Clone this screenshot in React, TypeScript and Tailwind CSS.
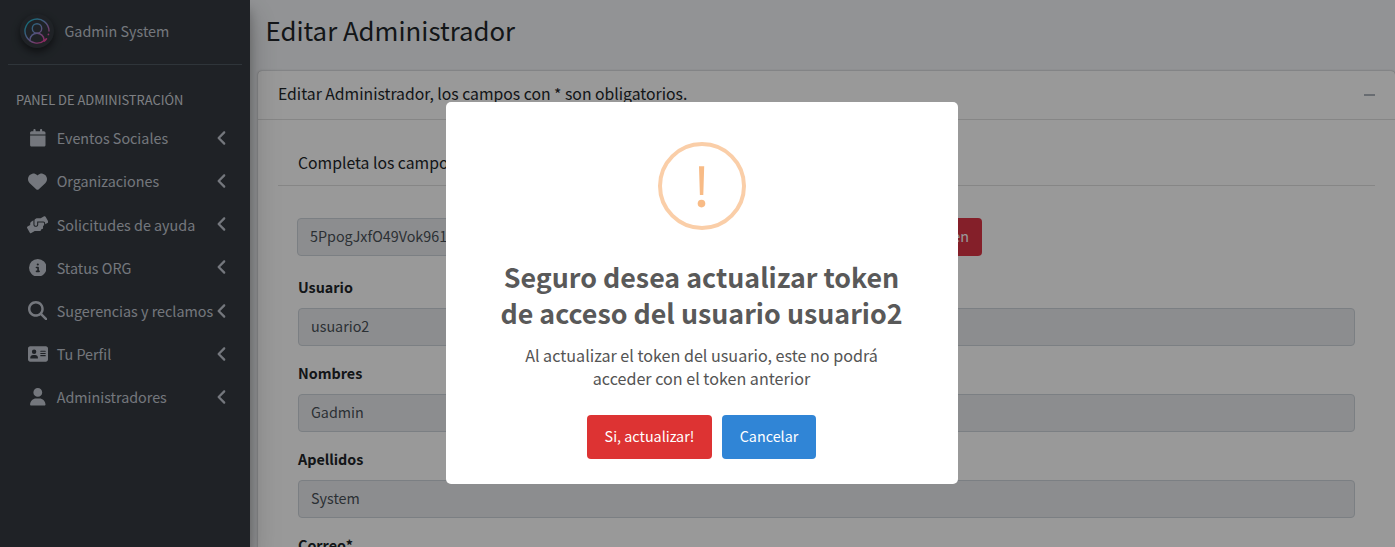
import type { IconType } from "react-icons";
import { FaHandsHelping } from "react-icons/fa";
import {
  FaAddressCard,
  FaAngleLeft,
  FaCalendar,
  FaCircleInfo,
  FaHeart,
  FaMagnifyingGlass,
  FaUser,
} from "react-icons/fa6";

const navItems: { label: string; icon: IconType; size: string }[] = [
  { label: "Eventos Sociales", icon: FaCalendar, size: "size-[17.6px]" },
  { label: "Organizaciones", icon: FaHeart, size: "size-[19px]" },
  { label: "Solicitudes de ayuda", icon: FaHandsHelping, size: "size-[21.4px]" },
  { label: "Status ORG", icon: FaCircleInfo, size: "size-[17.6px]" },
  { label: "Sugerencias y reclamos", icon: FaMagnifyingGlass, size: "size-[19.4px]" },
  { label: "Tu Perfil", icon: FaAddressCard, size: "size-[20px]" },
  { label: "Administradores", icon: FaUser, size: "size-[17.6px]" },
];

const fields = [
  { label: "Usuario", value: "usuario2" },
  { label: "Nombres", value: "Gadmin" },
  { label: "Apellidos", value: "System" },
  { label: "Correo*", value: "" },
];

function Avatar() {
  return (
    <div className="mb-[2px] flex h-[34px] w-[34px] items-center justify-center rounded-full bg-[#343a40] shadow-[0_3px_6px_rgba(0,0,0,0.3),0_4px_10px_rgba(0,0,0,0.3)]">
      <svg viewBox="0 0 26 26" className="h-[26px] w-[26px]" fill="none" stroke="url(#avatar)" strokeWidth="1.4" strokeLinecap="round">
        <defs>
          <linearGradient id="avatar" x1="3" y1="3" x2="22" y2="24" gradientUnits="userSpaceOnUse">
            <stop offset="0" stopColor="#1ab8cc" />
            <stop offset="0.5" stopColor="#868cd0" />
            <stop offset="1" stopColor="#ff3c9c" />
          </linearGradient>
        </defs>
        <path d="M25 13A12 12 0 1 0 21 22" />
        <path d="M24.4 16.4v.1M22.4 20.8L20.4 22.8" strokeWidth="1.7" />
        <circle cx="13" cy="10.4" r="4.7" />
        <path d="M6 22.6v-.8a7 6.6 0 0 1 14 0v.8" />
      </svg>
    </div>
  );
}

function Sidebar() {
  return (
    <aside className="relative z-10 flex h-full w-[250px] shrink-0 flex-col bg-[#343a40] px-2 text-[14.33px] text-[#c2c7d0] shadow-[0_14px_28px_rgba(0,0,0,0.25),0_10px_10px_rgba(0,0,0,0.22)]">
      <div className="flex h-[65px] shrink-0 items-center border-b border-[#4f5962] pl-[12px]">
        <Avatar />
        <span className="pb-[2px] pl-[10.5px]">Gadmin System</span>
      </div>
      <div className="mt-[23px] h-[23px] pl-2 text-[12.9px] leading-[23px] text-[#d0d4db]">PANEL DE ADMINISTRACIÓN</div>
      <nav className="mt-[5.3px] flex flex-col">
        {navItems.map(({ label, icon: Icon, size }) => (
          <a key={label} className="flex h-[43.2px] items-center pr-[11px] whitespace-nowrap">
            <span className="ml-[17px] flex w-[25px] shrink-0 justify-center">
              <Icon className={`${size} shrink-0`} />
            </span>
            <span className="ml-[6.7px] w-0 flex-1">{label}</span>
            <FaAngleLeft className="h-[18px] w-auto shrink-0" />
          </a>
        ))}
      </nav>
    </aside>
  );
}

function Field({ label, value }: { label: string; value: string }) {
  return (
    <div className="flex h-[86px] flex-col">
      <label className="h-[32px] font-bold leading-[22px]">{label}</label>
      <div className="flex h-[38px] items-center rounded border border-[#ced4da] bg-[#e9ecef] px-3 pb-[2px] text-[#495057]">{value}</div>
    </div>
  );
}

function Content() {
  return (
    <main className="flex h-full min-w-0 flex-1 flex-col bg-[#f4f6f9] pl-2">
      <h1 className="h-[71px] shrink-0 pl-[7.5px] text-[25.8px] leading-[60px]">Editar Administrador</h1>
      <section className="flex shrink-0 flex-col rounded bg-white shadow-[0_0_1px_rgba(0,0,0,0.3),0_0_3px_rgba(0,0,0,0.2)]">
        <header className="flex h-[49px] items-center justify-between border-b border-[#dfdfdf] px-5 text-[15.76px]">
          <h3 className="pb-[3px]">Editar Administrador, los campos con * son obligatorios.</h3>
          <div className="h-[2px] w-[11px] bg-[#adb5bd]" />
        </header>
        <div className="px-5 pt-5">
          <div className="h-[46px] border-b border-[#dfdfdf] pl-5 text-[15.76px] leading-[46px]">Completa los campos</div>
          <div className="px-5 pt-[32px]">
            <div className="-ml-px flex h-[38px] w-[685px]">
              <div className="flex flex-1 items-center rounded-l border border-[#ced4da] bg-[#e9ecef] px-3 pb-[2px] text-[#495057]">5PpogJxfO49Vok961</div>
              <button className="rounded-r bg-[#dc3545] px-[13px] pb-[2px] text-white">Actualizar token</button>
            </div>
            <div className="pt-[20px]">
              {fields.map((field) => (
                <Field key={field.label} {...field} />
              ))}
            </div>
          </div>
        </div>
      </section>
    </main>
  );
}

function ConfirmDialog() {
  return (
    <div className="absolute inset-0 z-20 flex justify-center bg-black/40 pt-[102px] pl-[9px]">
      <div role="dialog" className="flex h-[382px] w-[512px] flex-col items-center rounded-[5px] bg-white pt-10 text-[#545454]">
        <div className="flex h-[88px] w-[88px] shrink-0 items-center justify-center rounded-full border-4 border-[#facea8]">
          <svg viewBox="0 0 10 44" className="h-[44px] w-[10px]" fill="#f8bb86">
            <path d="M2 2.3h5.2l-.9 28.7H2.9z" />
            <circle cx="4.5" cy="39.6" r="3.8" />
          </svg>
        </div>
        <h2 className="mt-[29px] pr-px text-center text-[26.82px] font-bold leading-[36px] text-[#595959]">
          Seguro desea actualizar token
          <br />
          de acceso del usuario usuario2
        </h2>
        <p className="mt-[13px] pr-px text-center text-[16.12px] leading-[23px]">
          Al actualizar el token del usuario, este no podrá
          <br />
          acceder con el token anterior
        </p>
        <div className="mt-[25px] mr-px flex gap-[10px] text-[14.33px] text-white">
          <button className="h-[44px] w-[125px] rounded bg-[#dd3333] pb-[2px]">Si, actualizar!</button>
          <button className="h-[44px] w-[94px] rounded bg-[#3085d6] pb-[2px]">Cancelar</button>
        </div>
      </div>
    </div>
  );
}

export default function App() {
  return (
    <div className="relative flex h-[547px] w-full overflow-hidden font-['Noto_Sans_CJK_SC','Noto_Sans',sans-serif] text-[14.33px] text-[#212529]">
      <Sidebar />
      <Content />
      <ConfirmDialog />
    </div>
  );
}
